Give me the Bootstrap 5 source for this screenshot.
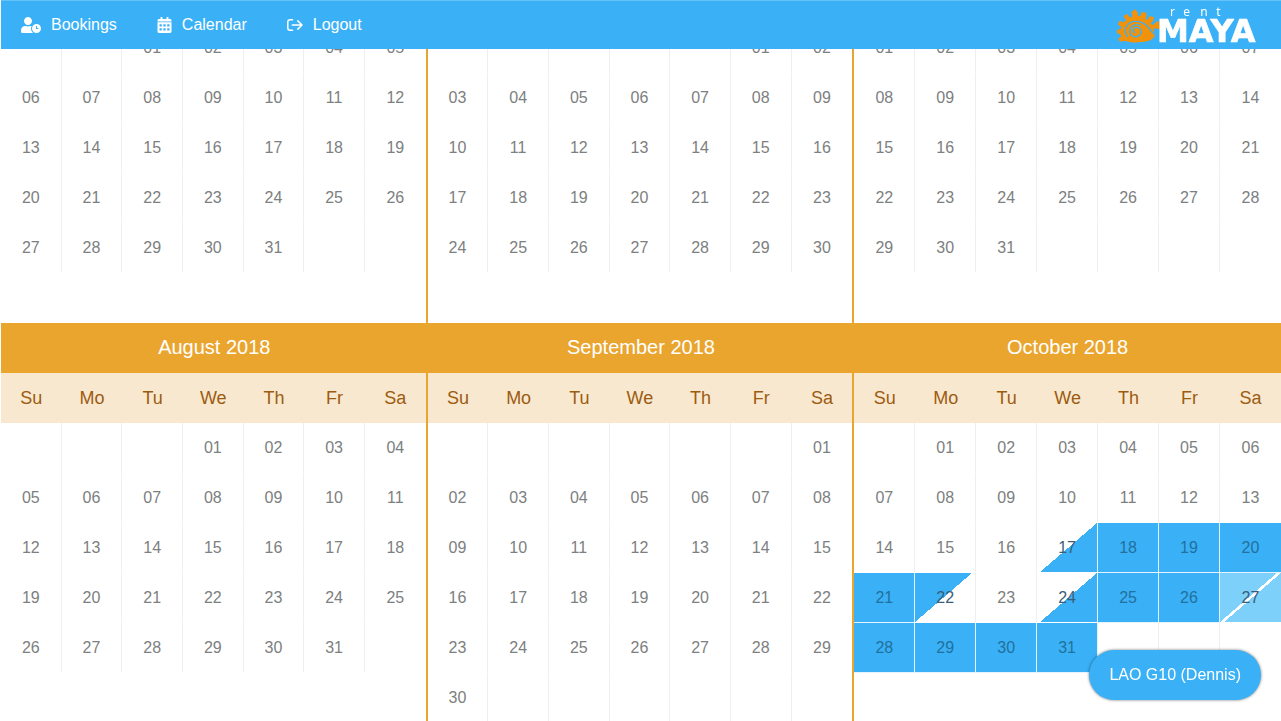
<!DOCTYPE html>
<html lang="en">
<head>
<meta charset="utf-8">
<meta name="viewport" content="width=device-width, initial-scale=1">
<title>Rent Maya – Calendar</title>
<link href="https://cdn.jsdelivr.net/npm/bootstrap@5.3.0/dist/css/bootstrap.min.css" rel="stylesheet">
<style>
:root { --sky: #3ab1f7; --sky-light: #7dd0f9; --sun: #eaa52f; }
body { font-family: "Liberation Sans", Arial, sans-serif; font-size: 16px; line-height: 24px; color: #7d8080; padding-left: 1px; background: #fff; }
.topbar { background: var(--sky); border-top: 1px solid #66c2f9; min-height: 49px; margin-left: 1px; }
.topbar .nav-link { color: #fff; gap: 10px; padding: 12px 20px; }
.topbar svg { display: block; }
.calendar { padding-top: 23px; }
.month { border-right: 2px solid var(--sun); min-height: 300px; }
.month:nth-child(3n) { border-right: 0; }
.days { width: 100%; table-layout: fixed; border-collapse: separate; border-spacing: 0; text-align: center; }
.days caption { caption-side: top; background: var(--sun); color: #fff; font-size: 20px; padding: 0 0 2px; line-height: 48px; text-align: center; }
.days th { background: #f9e8d0; color: #9c5c10; font-size: 18px; font-weight: 400; height: 50px; padding: 0; }
.month:not(:nth-child(3n)) caption { margin-right: -2px; }
.days td { height: 50px; padding: 0; border-right: 1px solid #efefef; border-bottom: 1px solid #fff; background-clip: padding-box; background-repeat: no-repeat; background-size: 57px 49px; }
.days td:last-child { border-right: 0; }
.days td.full { background-color: var(--sky); color: #22709c; border-right-color: #e4f4fe; border-bottom-color: #e4f4fe; }
.days td.arrive, .days td.leave, .days td.swap { color: #3c5d78; }
.days td.arrive { background-image: linear-gradient(to bottom right, transparent 50%, var(--sky) 50%); background-position: right top; border-right-color: #e4f4fe; }
.days td.leave { background-image: linear-gradient(to bottom right, var(--sky) 50%, transparent 50%); background-position: left top; }
.days td.swap { background-image: linear-gradient(to bottom right, var(--sky-light) 50%, transparent 50%), linear-gradient(to bottom right, transparent 50%, var(--sky-light) 50%); background-position: left top, right top; }
.place { background: var(--sky); color: #fff; height: 50px; padding: 0 20px; right: 20px; bottom: 21px; box-shadow: 0 0 3px rgba(0,0,0,.55); }
.place:hover { background: #2aa3ea; color: #fff; }
</style>
</head>
<body class="vh-100 overflow-hidden">
<nav class="topbar fixed-top d-flex align-items-center justify-content-between" aria-label="Main">
  <ul class="nav flex-nowrap">
    <li class="nav-item"><a class="nav-link d-flex align-items-center" href="#bookings">
      <svg width="20" height="16" viewBox="0 0 640 512" fill="currentColor" aria-hidden="true"><path d="M496 224c-79.6 0-144 64.4-144 144s64.4 144 144 144 144-64.4 144-144-64.4-144-144-144zm64 150.3c0 5.3-4.4 9.7-9.7 9.7h-60.6c-5.3 0-9.7-4.4-9.7-9.7v-76.6c0-5.3 4.4-9.7 9.7-9.7h12.6c5.3 0 9.7 4.4 9.7 9.7V352h38.3c5.3 0 9.7 4.4 9.7 9.7v12.6zM320 368c0-27.8 6.7-54.1 18.2-77.5-8-1.5-16.2-2.5-24.6-2.5h-16.7c-22.2 10.2-46.9 16-72.9 16s-50.6-5.8-72.9-16h-16.7C60.2 288 0 348.2 0 422.4V464c0 26.5 21.5 48 48 48h347.1c-45.3-31.9-75.1-84.5-75.1-144zm-96-112c70.7 0 128-57.3 128-128S294.7 0 224 0 96 57.3 96 128s57.3 128 128 128z"/></svg>
      Bookings</a></li>
    <li class="nav-item"><a class="nav-link d-flex align-items-center" href="#calendar">
      <svg width="15" height="16" viewBox="0 0 448 512" fill="currentColor" fill-rule="evenodd" aria-hidden="true"><path d="M400 64h-48V16c0-8.8-7.2-16-16-16h-32c-8.8 0-16 7.2-16 16v48H160V16c0-8.8-7.2-16-16-16h-32c-8.8 0-16 7.2-16 16v48H48C21.5 64 0 85.5 0 112v32h448v-32c0-26.5-21.5-48-48-48z"/><path d="M0 168h448v296c0 26.5-21.5 48-48 48H48c-26.5 0-48-21.5-48-48zM64 232v72h72v-72zM188 232v72h72v-72zM312 232v72h72v-72zM64 360v72h72v-72zM188 360v72h72v-72zM312 360v72h72v-72z"/></svg>
      Calendar</a></li>
    <li class="nav-item"><a class="nav-link d-flex align-items-center" href="#logout">
      <svg width="16" height="16" viewBox="0 0 16 16" fill="none" stroke="currentColor" stroke-width="1.5" stroke-linecap="round" stroke-linejoin="round" aria-hidden="true"><path d="M5.5 2.700H3A2.200 2.200 0 0 0 .8 4.900v6.200A2.200 2.200 0 0 0 3 13.300h2.500M5.300 8h9.300M10.800 3.900 15 8l-4.200 4.100"/></svg>
      Logout</a></li>
  </ul>
  <a href="#home" class="pe-3 me-1" aria-label="Rent Maya">
    <svg width="148" height="37" viewBox="39 18 444 111" overflow="visible" aria-hidden="true">
      <path fill="#f0920c" d="M74 119 60 122 54 114 64 106 60 99 51 97 50 87 62 84 64 77 54 71 58 59 72 64 78 57 70 46 80 38 91 50 97 46 94 33 104 25 113 34 114 44 121 45 125 33 139 35 140 47 136 52 143 57 149 45 162 49 159 61 152 66 157 73 172 60 179 64 175 72 187 65 189 75 178 84 161 82C159 89 164 96 165 103 158 119 141 123 117 124 100 125 84 123 74 119z"/>
      <path d="M82 107C65 83 84 61 109 61 134 61 146 81 162 99M104 95C95 89 101 78 111 79 125 80 126 97 117 104 104 113 88 103 90 88 92 74 107 67 119 73" fill="none" stroke="#3ab1f7" stroke-width="4" stroke-linecap="round"/>
      <text x="171" y="122" fill="#fff" stroke="#fff" stroke-width="2" stroke-linejoin="round" font-family="DejaVu Sans, sans-serif" font-weight="700" font-size="96">MAYA</text>
      <text x="210 250 301 349" y="46" fill="#fff" font-family="Noto Sans, sans-serif" font-size="36">rent</text>
    </svg>
  </a>
</nav>

<main id="months" class="calendar row g-0 row-cols-3"></main>

<button type="button" class="place btn border-0 rounded-pill position-fixed">LAO G10 (Dennis)</button>

<script src="https://cdn.jsdelivr.net/npm/bootstrap@5.3.0/dist/js/bootstrap.bundle.min.js"></script>
<script>
const months = [
  { name: 'May 2018', first: 2, length: 31 },
  { name: 'June 2018', first: 5, length: 30 },
  { name: 'July 2018', first: 0, length: 31 },
  { name: 'August 2018', first: 3, length: 31, heading: true },
  { name: 'September 2018', first: 6, length: 30, heading: true },
  { name: 'October 2018', first: 1, length: 31, heading: true,
    booked: { 17: 'arrive', 18: 'full', 19: 'full', 20: 'full', 21: 'full', 22: 'leave', 24: 'arrive', 25: 'full', 26: 'full', 27: 'swap', 28: 'full', 29: 'full', 30: 'full', 31: 'full' } }
];
const weekdays = ['Su', 'Mo', 'Tu', 'We', 'Th', 'Fr', 'Sa'];

function renderMonth(m) {
  const head = m.heading
    ? `<caption>${m.name}</caption><thead><tr>${weekdays.map(d => `<th scope="col">${d}</th>`).join('')}</tr></thead>` : '';
  const weeks = Math.ceil((m.first + m.length) / 7);
  let rows = '';
  for (let w = 0; w < weeks; w++) {
    rows += '<tr>';
    for (let d = 0; d < 7; d++) {
      const n = w * 7 + d - m.first + 1;
      const inside = n > 0 && n <= m.length;
      const state = inside && m.booked && m.booked[n] || '';
      rows += `<td${state ? ` class="${state}"` : ''}>${inside ? String(n).padStart(2, '0') : ''}</td>`;
    }
    rows += '</tr>';
  }
  return `<section class="month col"><table class="days" aria-label="${m.name}">${head}<tbody>${rows}</tbody></table></section>`;
}
document.getElementById('months').innerHTML = months.map(renderMonth).join('');
</script>
</body>
</html>
